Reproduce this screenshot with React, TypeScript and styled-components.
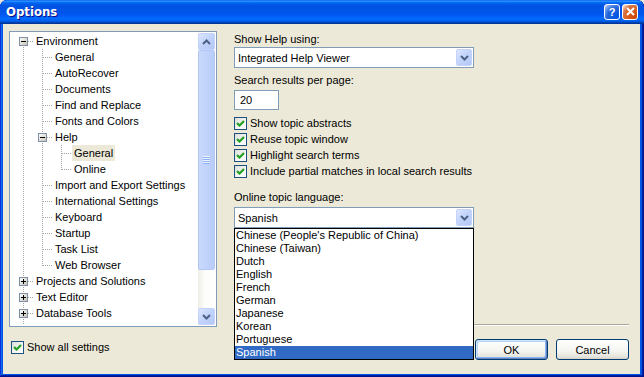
import React from 'react';
import styled, { createGlobalStyle } from 'styled-components';

type TreeRow = {
  label: string;
  level: number;
  rails?: boolean[];
  toggle?: 'plus' | 'minus';
  first?: boolean;
  last?: boolean;
  selected?: boolean;
};

const TREE: TreeRow[] = [
  { label: 'Environment', level: 0, toggle: 'minus', first: true },
  { label: 'General', level: 1, rails: [true] },
  { label: 'AutoRecover', level: 1, rails: [true] },
  { label: 'Documents', level: 1, rails: [true] },
  { label: 'Find and Replace', level: 1, rails: [true] },
  { label: 'Fonts and Colors', level: 1, rails: [true] },
  { label: 'Help', level: 1, rails: [true], toggle: 'minus' },
  { label: 'General', level: 2, rails: [true, true], selected: true },
  { label: 'Online', level: 2, rails: [true, true], last: true },
  { label: 'Import and Export Settings', level: 1, rails: [true] },
  { label: 'International Settings', level: 1, rails: [true] },
  { label: 'Keyboard', level: 1, rails: [true] },
  { label: 'Startup', level: 1, rails: [true] },
  { label: 'Task List', level: 1, rails: [true] },
  { label: 'Web Browser', level: 1, rails: [true], last: true },
  { label: 'Projects and Solutions', level: 0, toggle: 'plus' },
  { label: 'Text Editor', level: 0, toggle: 'plus' },
  { label: 'Database Tools', level: 0, toggle: 'plus' },
  { label: 'Device Tools', level: 0, toggle: 'plus' },
];

const CHECKS = [
  'Show topic abstracts',
  'Reuse topic window',
  'Highlight search terms',
  'Include partial matches in local search results',
];

const LANGUAGES = [
  "Chinese (People's Republic of China)",
  'Chinese (Taiwan)',
  'Dutch',
  'English',
  'French',
  'German',
  'Japanese',
  'Korean',
  'Portuguese',
  'Spanish',
];

const DOT = '#a8a8a0';

const Rail = ({ on }: { on: boolean }) => (
  <svg width="19" height="16" viewBox="0 0 19 16">
    {on && (
      <line x1="9.5" y1="0" x2="9.5" y2="16" stroke={DOT} strokeDasharray="1 1" shapeRendering="crispEdges" />
    )}
  </svg>
);

const Connector = ({ row }: { row: TreeRow }) => (
  <svg width="19" height="16" viewBox="0 0 19 16">
    <line
      x1="9.5"
      y1={row.first ? 8 : 0}
      x2="9.5"
      y2={row.last ? 9 : 16}
      stroke={DOT}
      strokeDasharray="1 1"
      shapeRendering="crispEdges"
    />
    <line x1="10" y1="8.5" x2="19" y2="8.5" stroke={DOT} strokeDasharray="1 1" shapeRendering="crispEdges" />
    {row.toggle && (
      <g shapeRendering="crispEdges">
        <defs>
          <linearGradient id="exp" x1="0" y1="0" x2="1" y2="1">
            <stop offset="0" stopColor="#ffffff" />
            <stop offset="1" stopColor="#c6c2b2" />
          </linearGradient>
        </defs>
        <rect x="5.5" y="4.5" width="8" height="8" fill="url(#exp)" stroke="#7b8fa9" />
        <line x1="7" y1="8.5" x2="12" y2="8.5" stroke="#000" />
        {row.toggle === 'plus' && <line x1="9.5" y1="6" x2="9.5" y2="11" stroke="#000" />}
      </g>
    )}
  </svg>
);

const CheckMark = () => (
  <svg width="11" height="11" viewBox="0 0 11 11">
    <polyline points="2,5 4.5,7.5 9,3" fill="none" stroke="#21a121" strokeWidth="2.2" />
  </svg>
);

const Chevron = ({ up }: { up?: boolean }) => (
  <svg width="9" height="6" viewBox="0 0 9 6">
    <polyline
      points={up ? '1,5 4.5,1.5 8,5' : '1,1 4.5,4.5 8,1'}
      fill="none"
      stroke="#4d6185"
      strokeWidth="2"
    />
  </svg>
);

const App = () => (
  <>
    <GlobalStyle />
    <Window>
      <TitleBar>
        <Title>Options</Title>
        <CaptionButtons>
          <CaptionButton $kind="help">?</CaptionButton>
          <CaptionButton $kind="close">
            <svg width="9" height="9" viewBox="0 0 9 9">
              <path d="M1 1 L8 8 M8 1 L1 8" stroke="#fff" strokeWidth="2" />
            </svg>
          </CaptionButton>
        </CaptionButtons>
      </TitleBar>

      <Body>
        <TreePanel>
          <TreeList>
            {TREE.map((row, i) => (
              <TreeItem key={i}>
                {(row.rails ?? []).map((on, k) => (
                  <Rail key={k} on={on} />
                ))}
                <Connector row={row} />
                <TreeLabel $selected={row.selected}>{row.label}</TreeLabel>
              </TreeItem>
            ))}
          </TreeList>
          <ScrollBar>
            <ScrollButton>
              <Chevron up />
            </ScrollButton>
            <Thumb>
              <Grip />
            </Thumb>
            <Track />
            <ScrollButton>
              <Chevron />
            </ScrollButton>
          </ScrollBar>
        </TreePanel>

        <Form>
          <Label>Show Help using:</Label>
          <Combo $gap={1}>
            <ComboText>Integrated Help Viewer</ComboText>
            <DropButton>
              <Chevron />
            </DropButton>
          </Combo>

          <Label $gap={6}>Search results per page:</Label>
          <TextBox>20</TextBox>

          <CheckList>
            {CHECKS.map((text) => (
              <CheckRow key={text}>
                <CheckBox>
                  <CheckMark />
                </CheckBox>
                {text}
              </CheckRow>
            ))}
          </CheckList>

          <Label $gap={10}>Online topic language:</Label>
          <Combo $gap={3}>
            <ComboText>Spanish</ComboText>
            <DropButton>
              <Chevron />
            </DropButton>
            <DropList>
              {LANGUAGES.map((lang) => (
                <DropItem key={lang} $selected={lang === 'Spanish'}>
                  {lang}
                </DropItem>
              ))}
            </DropList>
          </Combo>

          <Separator />
        </Form>

        <ShowAll>
          <CheckBox>
            <CheckMark />
          </CheckBox>
          Show all settings
        </ShowAll>

        <Buttons>
          <Button type="button" $default>
            OK
          </Button>
          <Button type="button">Cancel</Button>
        </Buttons>
      </Body>
    </Window>
  </>
);

const GlobalStyle = createGlobalStyle`
  * {
    box-sizing: border-box;
  }

  html, body {
    margin: 0;
    padding: 0;
    background: #ece9d8;
  }

  body {
    font-family: "Liberation Sans", Arial, sans-serif;
    font-size: 11px;
    color: #000;
  }
`;

const Window = styled.div`
  display: flex;
  flex-direction: column;
  width: 644px;
  height: 377px;
  padding: 0 4px 3px 3px;
  background: #0054e3;
  border-radius: 7px 7px 0 0;
  box-shadow: inset -1px -1px #00138c, inset 1px 1px #0831d9, inset -2px -2px #001ea0, inset 2px 2px #166aee;
  overflow: hidden;
`;

const TitleBar = styled.div`
  display: flex;
  align-items: center;
  height: 24px;
  flex: none;
  margin: 0 -4px 0 -3px;
  padding: 0 6px 1px 6px;
  border-radius: 7px 7px 0 0;
  background: linear-gradient(
    to bottom,
    #0058ee 0%,
    #3593ff 4%,
    #288eff 6%,
    #127dff 8%,
    #036ffc 10%,
    #0262ee 14%,
    #0057e5 20%,
    #0054e3 24%,
    #0055eb 56%,
    #005bf5 66%,
    #026afe 76%,
    #0062ef 86%,
    #0052d6 92%,
    #0040ab 94%,
    #003092 100%
  );
`;

const Title = styled.span`
  font-family: "Liberation Sans Narrow", "DejaVu Sans Condensed", "Liberation Sans", sans-serif;
  font-weight: bold;
  font-size: 13px;
  color: #fff;
  text-shadow: 1px 1px #0f1089;
`;

const CaptionButtons = styled.div`
  display: flex;
  gap: 2px;
  margin-left: auto;
`;

const CaptionButton = styled.div<{ $kind: 'help' | 'close' }>`
  display: flex;
  align-items: center;
  justify-content: center;
  width: 16px;
  height: 16px;
  border: 1px solid #fff;
  border-radius: 3px;
  color: #fff;
  font-weight: bold;
  font-size: 11px;
  background: ${(p) =>
    p.$kind === 'close'
      ? 'radial-gradient(circle at 90% 90%, #cc4600 0%, #dc6527 55%, #cd7546 70%, #ffccb2 90%, #fff 100%)'
      : 'radial-gradient(circle at 90% 90%, #0054e9 0%, #2263d5 55%, #4480e4 70%, #a3bbec 90%, #fff 100%)'};
`;

const Body = styled.div`
  flex: 1;
  display: grid;
  grid-template-columns: 208px 395px;
  grid-template-rows: 296px auto;
  column-gap: 17px;
  row-gap: 12px;
  padding: 7px 0 0 6px;
  background: #ece9d8;
`;

const TreePanel = styled.div`
  display: flex;
  border: 1px solid #7f9db9;
  padding: 1px;
  background: #fff;
  overflow: hidden;
`;

const TreeList = styled.div`
  flex: 1;
  padding-left: 3px;
  overflow: hidden;
`;

const TreeItem = styled.div`
  display: flex;
  align-items: center;
  height: 16px;
  white-space: nowrap;

  & > svg {
    flex: none;
  }
`;

const TreeLabel = styled.span<{ $selected?: boolean }>`
  margin-left: 1px;
  padding: 0 2px;
  line-height: 16px;
  background: ${(p) => (p.$selected ? '#ece9d8' : 'transparent')};
`;

const ScrollBar = styled.div`
  display: flex;
  flex-direction: column;
  width: 17px;
  flex: none;
  background: linear-gradient(to right, #eeede5, #fdfdfa 40%, #fff);
`;

const ScrollButton = styled.div`
  display: flex;
  align-items: center;
  justify-content: center;
  height: 17px;
  flex: none;
  border: 1px solid #c3d3fd;
  border-radius: 2px;
  background: linear-gradient(135deg, #dce6fe 0%, #c1d3fb 50%, #b4c8f6 100%);
`;

const Thumb = styled.div`
  display: flex;
  align-items: center;
  justify-content: center;
  height: 220px;
  flex: none;
  border: 1px solid #b4c8f6;
  border-radius: 2px;
  background: linear-gradient(to right, #c9d8fc, #c1d3fb 50%, #b8ccf8);
`;

const Grip = styled.div`
  width: 7px;
  height: 8px;
  background: repeating-linear-gradient(to bottom, #eef4fe 0 1px, #8cb0f8 1px 2px);
`;

const Track = styled.div`
  flex: 1;
`;

const Form = styled.div`
  display: flex;
  flex-direction: column;
  padding-top: 2px;
`;

const Label = styled.div<{ $gap?: number }>`
  line-height: 13px;
  margin-top: ${(p) => p.$gap ?? 0}px;
`;

const Combo = styled.div<{ $gap: number }>`
  position: relative;
  display: flex;
  align-items: center;
  width: 240px;
  height: 21px;
  margin-top: ${(p) => p.$gap}px;
  padding: 1px;
  border: 1px solid #7f9db9;
  background: #fff;
`;

const ComboText = styled.span`
  flex: 1;
  padding-left: 2px;
`;

const DropButton = styled.div`
  display: flex;
  align-items: center;
  justify-content: center;
  width: 16px;
  height: 17px;
  border: 1px solid #c3d3fd;
  border-radius: 2px;
  background: linear-gradient(135deg, #dce6fe 0%, #c1d3fb 50%, #b4c8f6 100%);
`;

const DropList = styled.div`
  position: absolute;
  top: calc(100% + 1px);
  left: -1px;
  width: 240px;
  border: 1px solid #000;
  background: #fff;
  z-index: 2;
`;

const DropItem = styled.div<{ $selected?: boolean }>`
  height: 13px;
  line-height: 13px;
  padding-left: 1px;
  white-space: nowrap;
  color: ${(p) => (p.$selected ? '#fff' : '#000')};
  background: ${(p) => (p.$selected ? '#316ac5' : 'transparent')};
`;

const TextBox = styled.div`
  width: 45px;
  height: 20px;
  margin-top: 3px;
  padding-left: 5px;
  line-height: 18px;
  border: 1px solid #7f9db9;
  background: #fff;
`;

const CheckList = styled.div`
  display: flex;
  flex-direction: column;
  margin-top: 7px;
`;

const CheckRow = styled.div`
  display: flex;
  align-items: flex-start;
  gap: 3px;
  height: 16px;
  line-height: 13px;
`;

const CheckBox = styled.span`
  display: inline-flex;
  align-items: center;
  justify-content: center;
  flex: none;
  width: 13px;
  height: 13px;
  border: 1px solid #1c5180;
  background: linear-gradient(135deg, #dcdcd7 0%, #f6f6f3 60%, #fff 100%);
`;

const Separator = styled.div`
  margin-top: auto;
  margin-bottom: 1px;
  height: 2px;
  border-top: 1px solid #aca899;
  border-bottom: 1px solid #fff;
`;

const ShowAll = styled.div`
  display: flex;
  align-items: flex-start;
  gap: 3px;
  padding: 2px 0 0 2px;
  line-height: 13px;
`;

const Buttons = styled.div`
  display: flex;
  justify-content: flex-end;
  gap: 8px;
`;

const Button = styled.button<{ $default?: boolean }>`
  width: 73px;
  height: 21px;
  padding: 0;
  font-family: inherit;
  font-size: 11px;
  color: #000;
  border: 1px solid #003c74;
  border-radius: 3px;
  background: linear-gradient(180deg, #fff 0%, #f4f4f0 60%, #e3e2da 90%, #d6d0c5 100%);
  box-shadow: ${(p) =>
    p.$default ? 'inset -1px -1px #6382bf, inset 1px 1px #cee7ff, inset -2px -2px #8cb4f2, inset 2px 2px #bcd4f6' : 'none'};
`;

export default App;
